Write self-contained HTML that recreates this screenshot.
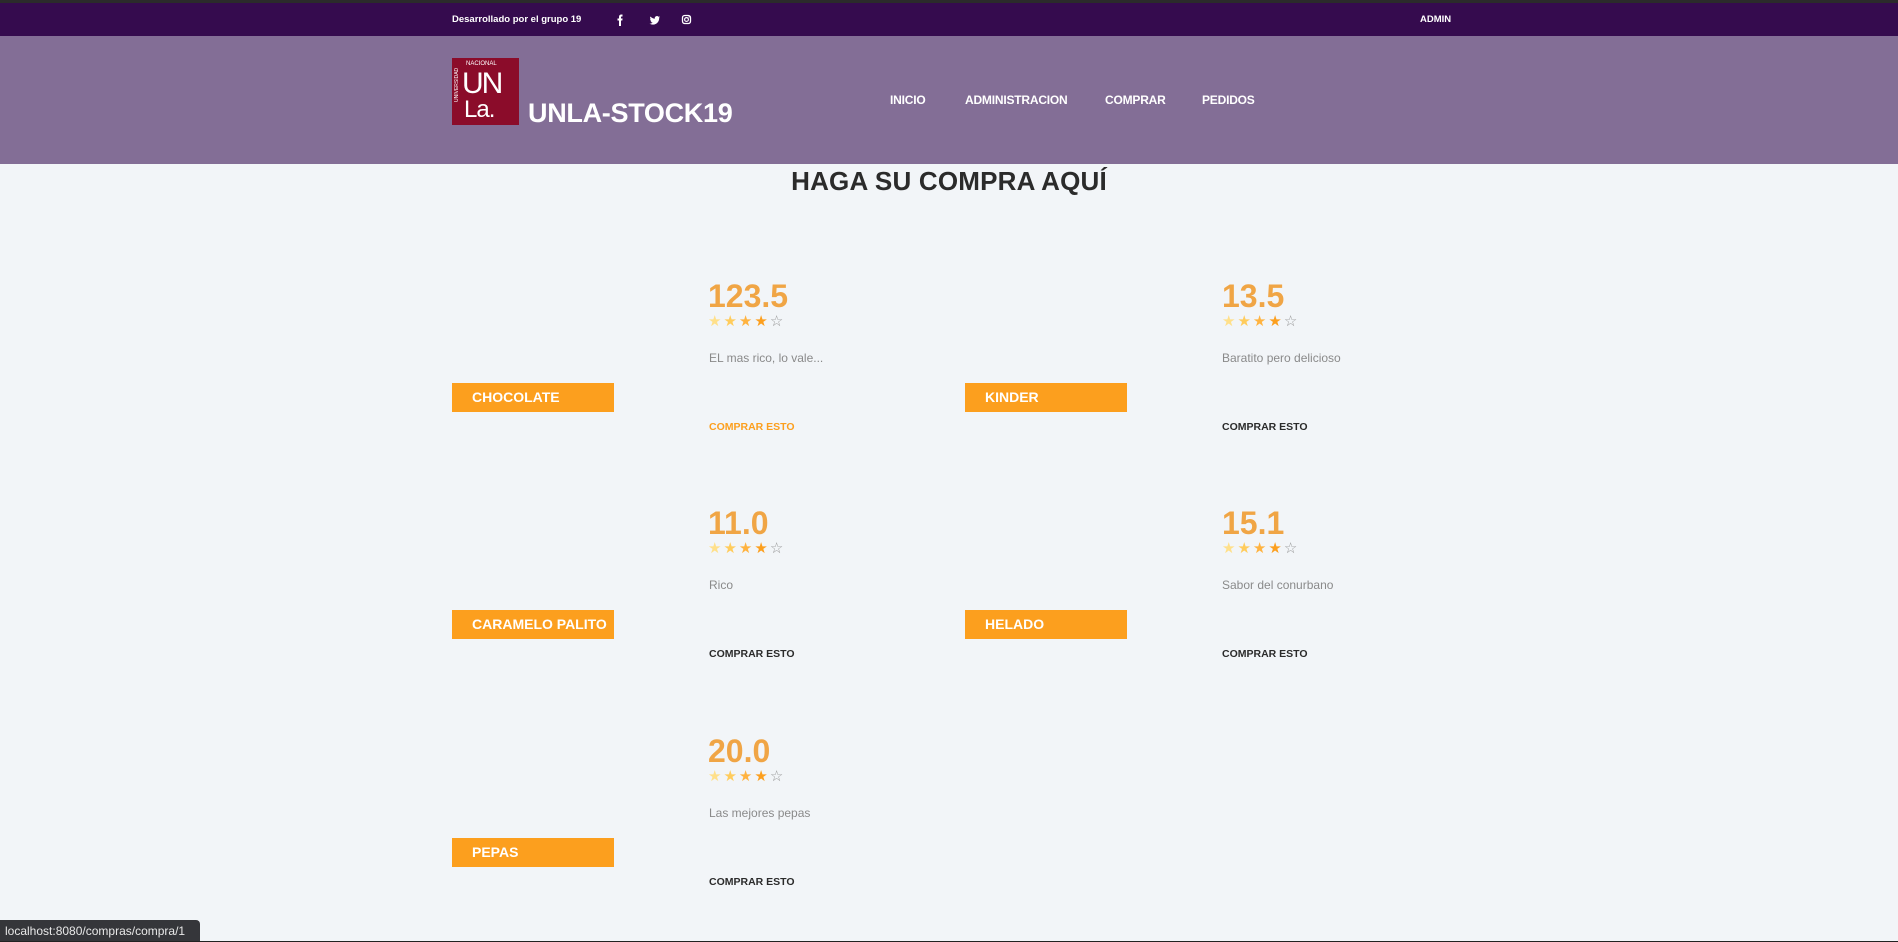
<!DOCTYPE html>
<html><head><meta charset="utf-8"><style>
*{margin:0;padding:0;box-sizing:border-box}
body{width:1898px;height:942px;background:#f2f5f8;font-family:"Liberation Sans",sans-serif;position:relative;overflow:hidden}
.a{position:absolute;white-space:nowrap}
.top{position:absolute;left:0;top:0;width:1898px;height:36px;background:#350b4e;border-top:3px solid #2b2b2b}
.hdr{position:absolute;left:0;top:36px;width:1898px;height:128px;background:#836e96}
.nav{color:#fff;font-weight:bold;font-size:12px;top:93px;letter-spacing:-.2px}
.price{color:#f0a545;font-weight:bold;font-size:32px;line-height:32px}
.stars{font-size:15px;line-height:14px;letter-spacing:2px}
.desc{color:#8a8a8a;font-size:12px;line-height:14px}
.lab{background:#fc9f1e;color:#fff;font-weight:bold;font-size:14px;width:162px;height:29px;line-height:29px;padding-left:20px}
.buy{font-weight:bold;font-size:10.5px;color:#2b2b2b;line-height:12px}
</style></head><body>
<div class="top"></div>
<div class="a" style="left:452px;top:14px;color:#fff;font-size:9.5px;font-weight:bold">Desarrollado por el grupo 19</div>
<svg class="a" style="left:616px;top:14px" width="80" height="12" viewBox="0 0 80 12">
<path d="M3 12V6.5H1.5V4.5H3V3C3 1.3 3.8 0.5 5.5 0.5H6.5V2.5H5.7C5.1 2.5 5 2.8 5 3.3V4.5H6.6L6.3 6.5H5V12Z" fill="#fff"/>
<g transform="translate(22,0)"><path d="M22 3.2c-.4.2-.8.3-1.2.3.4-.3.8-.7.9-1.2-.4.2-.9.4-1.3.5a2.1 2.1 0 0 0-3.6 1.9c-1.7-.1-3.3-.9-4.4-2.2-.6 1-.3 2.2.6 2.8-.3 0-.7-.1-1-.3 0 1 .7 1.9 1.7 2.1-.3.1-.6.1-1 0 .3.9 1.1 1.5 2 1.5-.9.7-2.1 1.1-3.2 1 1 .6 2.2 1 3.4 1 4.1 0 6.4-3.5 6.3-6.6.4-.3.8-.7 1.1-1.1z" fill="#fff"/></g>
<g transform="translate(29,0)"><rect x="37.5" y="1.5" width="8" height="8" rx="2.2" fill="none" stroke="#fff" stroke-width="1.3"/><circle cx="41.5" cy="5.5" r="1.9" fill="none" stroke="#fff" stroke-width="1.2"/><circle cx="44" cy="3" r=".6" fill="#fff"/></g>
</svg>
<div class="a" style="left:1420px;top:14px;color:#fff;font-size:9.5px;font-weight:bold">ADMIN</div>
<div class="hdr"></div>
<div class="a" style="left:452px;top:58px;width:67px;height:67px;background:#8b0c2a">
<div class="a" style="left:14px;top:3px;color:#fff;font-size:6px">NACIONAL</div>
<div class="a" style="left:10px;top:11px;color:#fff;font-size:30px;line-height:30px;letter-spacing:-2px">UN</div>
<div class="a" style="left:12px;top:40px;color:#fff;font-size:24px;line-height:24px;letter-spacing:-1px">La.</div>
<div class="a" style="left:2px;top:14px;color:#fff;font-size:5px;transform:rotate(-90deg);transform-origin:left top;top:44px">UNIVERSIDAD</div>
</div>
<div class="a" style="left:528px;top:98px;color:#fff;font-weight:bold;font-size:27px;line-height:30px;letter-spacing:-.3px">UNLA-STOCK19</div>
<div class="a nav" style="left:890px">INICIO</div>
<div class="a nav" style="left:965px">ADMINISTRACION</div>
<div class="a nav" style="left:1105px">COMPRAR</div>
<div class="a nav" style="left:1202px">PEDIDOS</div>
<div class="a" style="left:0;width:1898px;text-align:center;top:166px;font-weight:bold;font-size:26px;line-height:30px;color:#2b2b2b;letter-spacing:.2px">HAGA SU COMPRA AQUÍ</div>

<div class="a price" style="left:708px;top:280px">123.5</div>
<div class="a stars" style="left:708px;top:315px"><span style="color:#ffe08a">★</span><span style="color:#ffcc5c">★</span><span style="color:#ffb340">★</span><span style="color:#fc9f1e">★</span><span style="color:#999">☆</span></div>
<div class="a desc" style="left:709px;top:351px">EL mas rico, lo vale...</div>
<div class="a lab" style="left:452px;top:383px">CHOCOLATE</div>
<div class="a buy" style="left:709px;top:421px;color:#fc9f1e">COMPRAR ESTO</div>

<div class="a price" style="left:1222px;top:280px">13.5</div>
<div class="a stars" style="left:1222px;top:315px"><span style="color:#ffe08a">★</span><span style="color:#ffcc5c">★</span><span style="color:#ffb340">★</span><span style="color:#fc9f1e">★</span><span style="color:#999">☆</span></div>
<div class="a desc" style="left:1222px;top:351px">Baratito pero delicioso</div>
<div class="a lab" style="left:965px;top:383px">KINDER</div>
<div class="a buy" style="left:1222px;top:421px">COMPRAR ESTO</div>

<div class="a price" style="left:708px;top:507px">11.0</div>
<div class="a stars" style="left:708px;top:542px"><span style="color:#ffe08a">★</span><span style="color:#ffcc5c">★</span><span style="color:#ffb340">★</span><span style="color:#fc9f1e">★</span><span style="color:#999">☆</span></div>
<div class="a desc" style="left:709px;top:578px">Rico</div>
<div class="a lab" style="left:452px;top:610px">CARAMELO PALITO</div>
<div class="a buy" style="left:709px;top:648px">COMPRAR ESTO</div>

<div class="a price" style="left:1222px;top:507px">15.1</div>
<div class="a stars" style="left:1222px;top:542px"><span style="color:#ffe08a">★</span><span style="color:#ffcc5c">★</span><span style="color:#ffb340">★</span><span style="color:#fc9f1e">★</span><span style="color:#999">☆</span></div>
<div class="a desc" style="left:1222px;top:578px">Sabor del conurbano</div>
<div class="a lab" style="left:965px;top:610px">HELADO</div>
<div class="a buy" style="left:1222px;top:648px">COMPRAR ESTO</div>

<div class="a price" style="left:708px;top:735px">20.0</div>
<div class="a stars" style="left:708px;top:770px"><span style="color:#ffe08a">★</span><span style="color:#ffcc5c">★</span><span style="color:#ffb340">★</span><span style="color:#fc9f1e">★</span><span style="color:#999">☆</span></div>
<div class="a desc" style="left:709px;top:806px">Las mejores pepas</div>
<div class="a lab" style="left:452px;top:838px">PEPAS</div>
<div class="a buy" style="left:709px;top:876px">COMPRAR ESTO</div>

<div class="a" style="left:0;top:920px;width:200px;height:22px;background:#35363a;border-top-right-radius:4px;color:#e8e8e8;font-size:12px;line-height:22px;padding-left:5px">localhost:8080/compras/compra/1</div>
<div class="a" style="left:0;top:941px;width:1898px;height:1px;background:#222"></div>
</body></html>
